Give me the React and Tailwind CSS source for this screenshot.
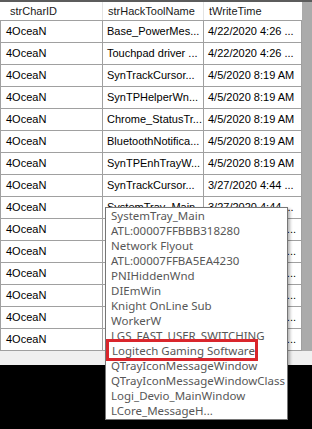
import React from "react";

const rows = [
  ["4OceaN", "Base_PowerMes...", "4/22/2020 4:26 ..."],
  ["4OceaN", "Touchpad driver ...", "4/22/2020 4:26 ..."],
  ["4OceaN", "SynTrackCursor...", "4/5/2020 8:19 AM"],
  ["4OceaN", "SynTPHelperWn...", "4/5/2020 8:19 AM"],
  ["4OceaN", "Chrome_StatusTr...", "4/5/2020 8:19 AM"],
  ["4OceaN", "BluetoothNotifica...", "4/5/2020 8:19 AM"],
  ["4OceaN", "SynTPEnhTrayW...", "4/5/2020 8:19 AM"],
  ["4OceaN", "SynTrackCursor...", "3/27/2020 4:44 ..."],
  ["4OceaN", "SystemTray_Main", "3/27/2020 4:44 ..."],
  ["4OceaN", "", "..."],
  ["4OceaN", "", "..."],
  ["4OceaN", "", "..."],
  ["4OceaN", "", "..."],
  ["4OceaN", "", "..."],
  ["4OceaN", "", "..."],
];

const tipLines = [
  "SystemTray_Main",
  "ATL:00007FFBBB318280",
  "Network Flyout",
  "ATL:00007FFBA5EA4230",
  "PNIHiddenWnd",
  "DIEmWin",
  "Knight OnLine Sub",
  "WorkerW",
  "LGS_FAST_USER_SWITCHING",
  "Logitech Gaming Software",
  "QTrayIconMessageWindow",
  "QTrayIconMessageWindowClass",
  "Logi_Devio_MainWindow",
  "LCore_MessageH...",
];

const App = () => {
  return (
    <div className="relative w-[312px] h-[429px] overflow-hidden bg-black flex flex-col font-['Liberation_Sans',Arial,sans-serif] text-[11px] text-black">
      {/* top edge */}
      <div className="h-[2px] bg-[#5c5c5c]" />

      {/* grid */}
      <div className="flex bg-[#ababab]">
        <div className="w-[302px] flex flex-col bg-white">
          {/* header */}
          <div className="flex h-[19px] border-b border-[#a0a0a0] text-[#1a1a1a]">
            <div className="w-[103px] flex items-center pl-[10px] border-r border-[#e3e3e3]">strCharID</div>
            <div className="w-[101px] flex items-center pl-[5px] border-r border-[#e3e3e3]">strHackToolName</div>
            <div className="w-[98px] flex items-center pl-[5px]">tWriteTime</div>
          </div>

          {/* rows */}
          {rows.map((r, i) => (
            <div key={i} className="flex h-[22px] border-b border-[#a0a0a0] whitespace-nowrap">
              <div className="w-[103px] flex items-center pl-[5px] border-l border-r border-[#a0a0a0]">{r[0]}</div>
              <div className="w-[101px] flex items-center pl-[4px] border-r border-[#a0a0a0] overflow-hidden">{r[1]}</div>
              <div
                className={
                  r[2] === "..."
                    ? "w-[98px] flex items-center justify-end pr-[5px] border-r border-[#a0a0a0]"
                    : "w-[98px] flex items-center pl-[4px] border-r border-[#a0a0a0] overflow-hidden"
                }
              >
                {r[2]}
              </div>
            </div>
          ))}
        </div>
        <div className="flex-1" />
      </div>

      {/* bottom strip */}
      <div className="h-[14px] bg-[#f0f0f0]" />

      {/* tooltip list */}
      <div className="absolute left-[105px] top-[207px] w-[183px] h-[213px] bg-white border border-[#767676] shadow-[2px_2px_3px_rgba(0,0,0,0.3)] pl-[5px] font-['Noto_Sans',sans-serif] text-[11.5px] leading-[15px] text-[#575757] whitespace-nowrap">
        {tipLines.map((t) => (
          <div key={t}>{t}</div>
        ))}
        {/* highlight */}
        <div className="absolute left-0 top-[131px] w-[152px] h-[22px] border-[3px] border-[#d9262c] bg-white flex items-center pl-[3px]">
          Logitech Gaming Software
        </div>
      </div>
    </div>
  );
};

export default App;
